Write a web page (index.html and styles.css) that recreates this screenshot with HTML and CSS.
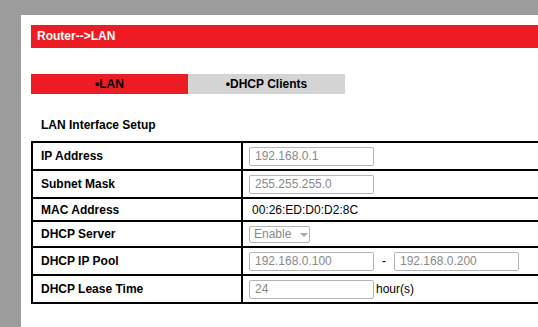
FILE: index.html
```
<!DOCTYPE html>
<html>
	<head>
		<meta http-equiv="Content-type" content="text/html; charset=utf-8">
		<title>Router LAN</title>
		<link rel="stylesheet" href="styles.css">
	</head>
	<body>
		<div class="page">
			<div class="titlebar">Router--&gt;LAN</div>

			<div class="tabs">
				<div class="tab active">&bull;LAN</div>
				<div class="tab">&bull;DHCP Clients</div>
			</div>

			<div class="section">LAN Interface Setup</div>

			<table class="setup">
				<tr class="tall">
					<td class="name">IP Address</td>
					<td class="value"><input type="text" class="field" value="192.168.0.1"></td>
				</tr>
				<tr class="tall">
					<td class="name">Subnet Mask</td>
					<td class="value"><input type="text" class="field" value="255.255.255.0"></td>
				</tr>
				<tr class="short">
					<td class="name">MAC Address</td>
					<td class="value"><span class="mac">00:26:ED:D0:D2:8C</span></td>
				</tr>
				<tr class="mid">
					<td class="name">DHCP Server</td>
					<td class="value">
						<div class="select">Enable <span class="arrow"></span></div>
					</td>
				</tr>
				<tr class="tall">
					<td class="name">DHCP IP Pool</td>
					<td class="value">
						<input type="text" class="field" value="192.168.0.100"><span class="dash">-</span><input type="text" class="field" value="192.168.0.200">
					</td>
				</tr>
				<tr class="tall">
					<td class="name">DHCP Lease Time</td>
					<td class="value"><input type="text" class="field" value="24"><span class="unit">hour(s)</span></td>
				</tr>
			</table>
		</div>
	</body>
</html>
```
FILE: styles.css
```
html, body {
	overflow: hidden;
}
body {
	margin: 0;
	background: #9c9c9c;
	font-family: "Liberation Sans", Arial, sans-serif;
	font-size: 12px;
	color: #000;
}
.page {
	margin: 15px 0 0 21px;
	padding: 10px 0 0 10px;
	background: #fff;
	height: calc(100vh - 15px);
	box-sizing: border-box;
}
.titlebar {
	height: 23px;
	line-height: 23px;
	padding-left: 6px;
	background: #ed1c24;
	color: #fff;
	font-weight: bold;
}
.tabs {
	display: flex;
	margin-top: 26px;
}
.tab {
	width: 157px;
	height: 20px;
	line-height: 20px;
	text-align: center;
	font-weight: bold;
	background: #d4d4d4;
}
.tab.active {
	background: #ed1c24;
}
.section {
	font-weight: bold;
	padding: 24px 0 0 10px;
	height: 23px;
}
.setup {
	border-collapse: collapse;
	width: 100%;
}
.setup td {
	border-top: 2px solid #000;
	padding: 0;
}
.setup tr:last-child td {
	border-bottom: 2px solid #000;
}
.setup td.name {
	border-left: 2px solid #000;
	width: 200px;
	padding-left: 8px;
	font-weight: bold;
}
.setup td.value {
	border-left: 2px solid #000;
	padding-left: 6px;
}
.tall {
	height: 28px;
}
.short {
	height: 23px;
}
.mid {
	height: 26px;
}
.field {
	width: 125px;
	height: 19px;
	border: 1px solid #b5b5b5;
	border-radius: 2px;
	padding: 0 5px;
	font-family: "Liberation Sans", Arial, sans-serif;
	font-size: 12px;
	color: #888;
	vertical-align: middle;
	box-sizing: border-box;
}
.mac {
	padding-left: 3px;
}
.select {
	display: inline-flex;
	align-items: center;
	width: 61px;
	height: 17px;
	box-sizing: border-box;
	border: 1px solid #b5b5b5;
	border-radius: 2px;
	padding-left: 4px;
	color: #888;
	vertical-align: middle;
}
.arrow {
	margin-left: 9px;
	border-left: 4px solid transparent;
	border-right: 4px solid transparent;
	border-top: 4px solid #aaa;
	margin-top: 2px;
}
.dash {
	display: inline-block;
	width: 20px;
	text-align: center;
	vertical-align: middle;
}
.unit {
	padding-left: 2px;
	vertical-align: middle;
}
```
